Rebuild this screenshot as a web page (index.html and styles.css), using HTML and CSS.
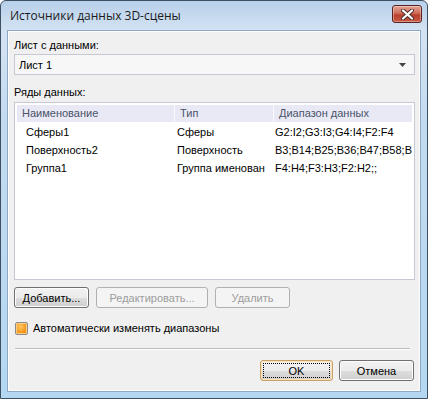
FILE: index.html
```html
<!DOCTYPE html>
<html lang="ru">
<head>
    <meta charset="UTF-8">
    <meta name="viewport" content="width=device-width, initial-scale=1.0">
    <title>Источники данных 3D-сцены</title>
    <link rel="stylesheet" href="styles.css">
</head>
<body>
    <div class="window">
        <div class="titlebar">
            <span class="title">Источники данных 3D-сцены</span>
            <div class="close-btn">
                <svg width="15" height="11" viewBox="0 0 15 11">
                    <path d="M3 1.5 L12 9.5 M12 1.5 L3 9.5" stroke="#4a2a2a" stroke-width="4" stroke-linecap="round"/>
                    <path d="M3 1.5 L12 9.5 M12 1.5 L3 9.5" stroke="#ffffff" stroke-width="2.2" stroke-linecap="round"/>
                </svg>
            </div>
        </div>

        <div class="client">
            <div class="label">Лист с данными:</div>
            <div class="combo">
                <span>Лист 1</span>
                <svg width="7" height="4" viewBox="0 0 7 4"><path d="M0 0 H7 L3.5 4 Z" fill="#444"/></svg>
            </div>

            <div class="label label-series">Ряды данных:</div>
            <div class="list">
                <div class="list-head">
                    <div class="col col-name">Наименование</div>
                    <div class="col col-type">Тип</div>
                    <div class="col col-range">Диапазон данных</div>
                </div>
                <div class="list-row">
                    <div class="col col-name">Сферы1</div>
                    <div class="col col-type">Сферы</div>
                    <div class="col col-range">G2:I2;G3:I3;G4:I4;F2:F4</div>
                </div>
                <div class="list-row">
                    <div class="col col-name">Поверхность2</div>
                    <div class="col col-type">Поверхность</div>
                    <div class="col col-range">B3;B14;B25;B36;B47;B58;B</div>
                </div>
                <div class="list-row">
                    <div class="col col-name">Группа1</div>
                    <div class="col col-type">Группа именован</div>
                    <div class="col col-range">F4:H4;F3:H3;F2:H2;;</div>
                </div>
            </div>

            <div class="actions">
                <button class="btn btn-add">Добавить...</button>
                <button class="btn btn-edit" disabled>Редактировать...</button>
                <button class="btn btn-del" disabled>Удалить</button>
            </div>

            <label class="check">
                <span class="check-box"></span>
                <span>Автоматически изменять диапазоны</span>
            </label>

            <div class="separator"></div>

            <div class="footer">
                <button class="btn btn-ok"><span class="focus">OK</span></button>
                <button class="btn btn-cancel">Отмена</button>
            </div>
        </div>
    </div>
</body>
</html>
```

FILE: styles.css
```css
body {
    margin: 0;
    padding: 0;
    font-family: 'Liberation Sans', Arial, sans-serif;
    font-size: 11px;
    color: #000;
    background-color: #fff;
}

.window {
    width: 428px;
    height: 399px;
    box-sizing: border-box;
    border: 1px solid #3e4f62;
    border-radius: 6px 6px 0 0;
    background: linear-gradient(to bottom, #b8d0ea 0px, #d4e3f3 30px, #c3dbf0 120px, #b4d8f2 399px);
    padding: 0 6px 6px 6px;
    display: flex;
    flex-direction: column;
}

.titlebar {
    height: 29px;
    display: flex;
    align-items: flex-start;
    justify-content: space-between;
}

.title {
    font-family: 'Open Sans', 'Noto Sans', sans-serif;
    font-size: 12px;
    color: #1b1b1b;
    margin: 6px 0 0 3px;
}

.close-btn {
    width: 28px;
    height: 16px;
    margin: 4px -1px 0 0;
    border: 1px solid #5b2320;
    border-radius: 3px;
    background: linear-gradient(to bottom, #e3a493 0px, #cf6f5c 7px, #b8402c 9px, #c85a44 16px);
    display: flex;
    align-items: center;
    justify-content: center;
    box-shadow: inset 0 0 0 1px rgba(255, 255, 255, 0.35);
}

.client {
    flex: 1;
    background-color: #f0f0f0;
    border: 1px solid #8ea8c4;
    box-shadow: inset 0 0 0 1px #fbfdff;
    padding: 0 5px 0 6px;
}

.label {
    margin-top: 7px;
    height: 14px;
    line-height: 14px;
}

.label-series {
    margin-top: 10px;
}

.combo {
    margin-top: 2px;
    height: 19px;
    border: 1px solid #c8c8d4;
    background-color: #f7f7f7;
    display: flex;
    align-items: center;
    justify-content: space-between;
    padding: 0 8px 0 4px;
}

.list {
    margin-top: 3px;
    height: 172px;
    border: 1px solid #c8c8d4;
    background-color: #fff;
    padding: 2px;
}

.list-head {
    display: flex;
    height: 17px;
    line-height: 17px;
    background-color: #e9e9f6;
    color: #4a5468;
}

.list-head .col + .col {
    border-left: 1px solid #fbfbff;
}

.list-row {
    display: flex;
    height: 18px;
    line-height: 18px;
}

.list-head + .list-row {
    margin-top: 1px;
}

.col {
    white-space: nowrap;
    overflow: hidden;
    box-sizing: border-box;
}

.col-name {
    width: 157px;
    padding-left: 5px;
}

.col-type {
    width: 99px;
    padding-left: 5px;
}

.col-range {
    flex: 1;
    padding-left: 5px;
}

.list-row .col-name {
    padding-left: 9px;
}

.list-row .col-type {
    padding-left: 3px;
}

.list-row .col-range {
    padding-left: 2px;
}

.actions {
    display: flex;
    gap: 7px;
    margin-top: 7px;
}

.btn {
    font-family: inherit;
    font-size: 11px;
    height: 21px;
    width: 75px;
    padding: 0;
    border: 1px solid #707070;
    border-radius: 3px;
    background: linear-gradient(to bottom, #f2f2f2 0%, #ebebeb 50%, #dddddd 51%, #cfcfcf 100%);
    color: #000;
    box-shadow: inset 0 0 0 1px #fcfcfc;
}

.btn:disabled {
    border-color: #adb2b5;
    background: #f4f4f4;
    color: #9d9d9d;
    box-shadow: none;
}

.btn-edit {
    width: 112px;
}

.check {
    display: flex;
    align-items: center;
    gap: 5px;
    margin-top: 13px;
    margin-left: 1px;
    height: 14px;
}

.check-box {
    width: 11px;
    height: 11px;
    border: 1px solid #8a8a8a;
    border-radius: 2px;
    background: radial-gradient(circle at 40% 35%, #ffc766 0%, #f59a1f 55%, #e07e0c 100%);
    box-shadow: inset 0 0 0 1px #fbd08a;
}

.separator {
    margin: 13px 5px 0 1px;
    height: 1px;
    background-color: #bcbcbc;
    border-bottom: 1px solid #fff;
}

.footer {
    display: flex;
    justify-content: flex-end;
    gap: 6px;
    margin-top: 10px;
    padding-right: 1px;
}

.btn-ok {
    width: 73px;
    border-color: #c9a067;
    box-shadow: inset 0 0 0 1px #fbe3b5;
    padding: 2px;
}

.btn-ok .focus {
    display: flex;
    align-items: center;
    justify-content: center;
    height: 100%;
    box-sizing: border-box;
    border: 1px dotted #000;
}

.btn-cancel {
    width: 75px;
}
```
